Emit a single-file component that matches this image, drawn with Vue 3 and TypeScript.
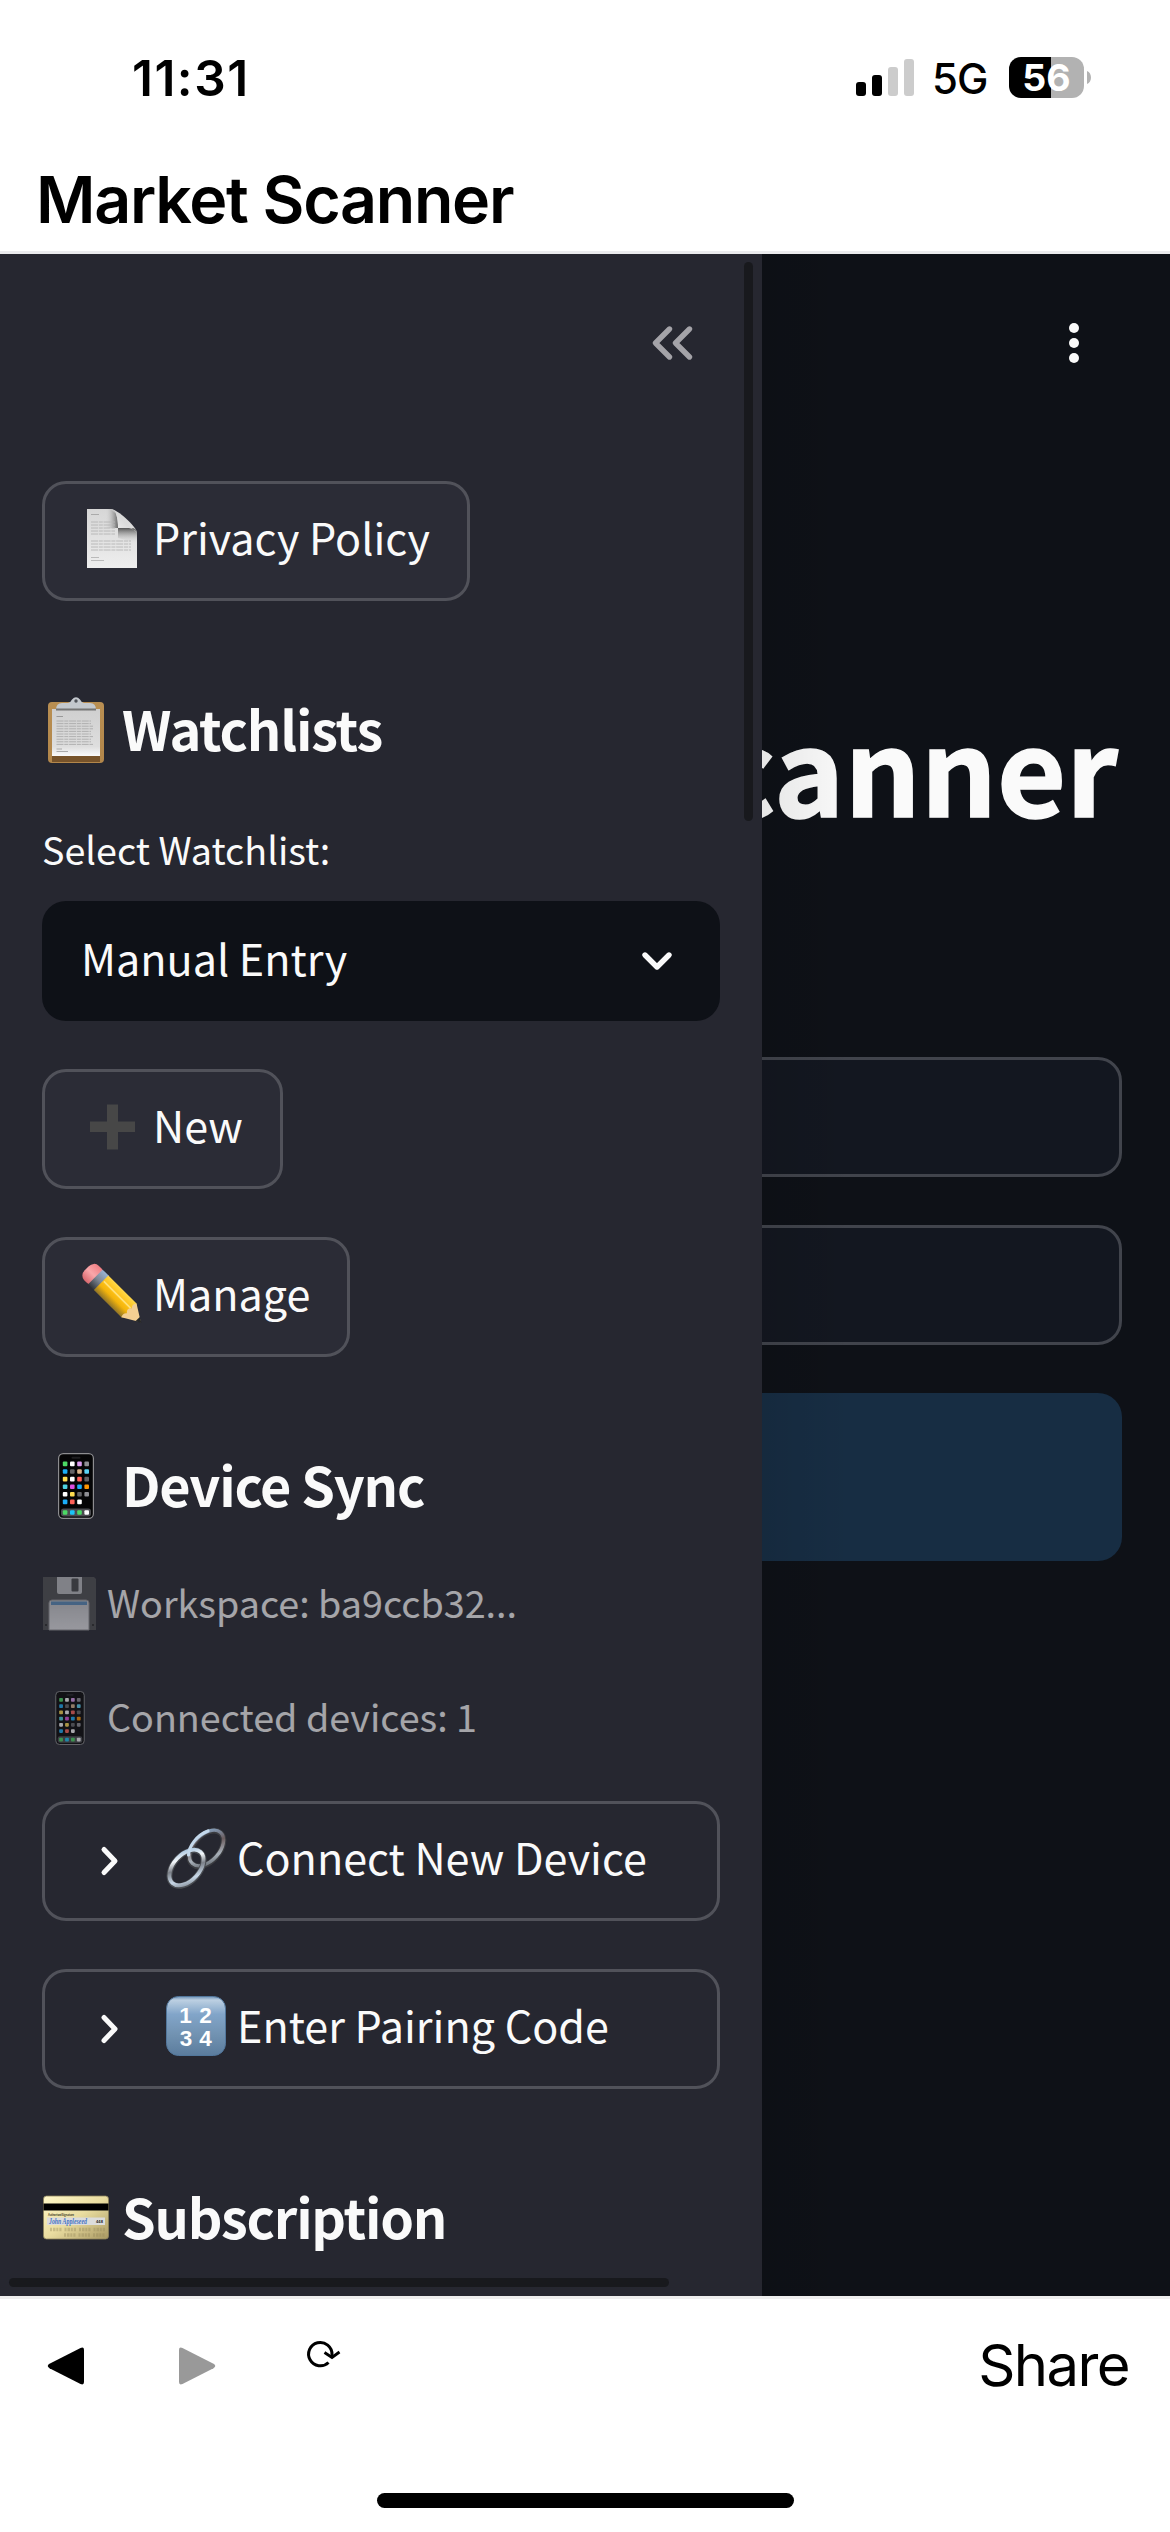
<script setup lang="ts">
interface Dot { x: number; y: number; c: string }

const palette: string[][] = [
  ['#4cd964', '#ffffff', '#dc9cf0', '#8e8e93'],
  ['#1badf8', '#636366', '#d8b48c', '#5ad4f5'],
  ['#ffdc50', '#ffffff', '#ff6259', '#636366'],
  ['#4fd3e0', '#dd4fe0', '#1badf8', '#ff9500'],
  ['#ffffff', '#ffdc50', '#636366', '#8e8e93'],
  ['#1badf8', '#ff6259', '#ffffff'],
]

const appDots: Dot[] = palette.flatMap((row, r) =>
  row.map((c, i) => ({ x: 19.8 + i * 7.2, y: 8.6 + r * 7.6, c })),
)
const dockDots: Dot[] = ['#4cd964', '#1bc5f8', '#4cd964', '#ffffff'].map((c, i) => ({
  x: 19.8 + i * 7.2, y: 57.2, c,
}))

const paperLines: number[] = [15, 18, 21, 24, 27, 34, 37, 40, 43]
const boardLines: number[] = [24, 26.6, 29.2, 31.8, 34.4, 37, 39.6, 42.2, 44.8, 47.4]
</script>

<template>
  <div class="screen">
    <!-- shared emoji artwork -->
    <svg class="defs" width="0" height="0" aria-hidden="true">
      <defs>
        <linearGradient id="page" x1="0" y1="0" x2="0" y2="1">
          <stop offset="0" stop-color="#d6d6d6" /><stop offset="1" stop-color="#eeeeee" />
        </linearGradient>
        <linearGradient id="fold" x1="0" y1="1" x2="1" y2="0">
          <stop offset="0" stop-color="#f6f6f6" /><stop offset="1" stop-color="#bdbdbd" />
        </linearGradient>
        <linearGradient id="foldShade" x1="0" y1="0" x2="0" y2="1">
          <stop offset="0" stop-color="#555" /><stop offset="1" stop-color="#ddd" stop-opacity="0" />
        </linearGradient>
        <linearGradient id="foldSide" x1="1" y1="0" x2="0" y2="0">
          <stop offset="0" stop-color="#666" /><stop offset="1" stop-color="#ddd" stop-opacity="0" />
        </linearGradient>
        <linearGradient id="board" x1="0" y1="0" x2="0" y2="1">
          <stop offset="0" stop-color="#b98f52" /><stop offset="1" stop-color="#b2864a" />
        </linearGradient>
        <linearGradient id="sheet" x1="0" y1="0" x2="0" y2="1">
          <stop offset="0" stop-color="#cfcfcf" /><stop offset=".8" stop-color="#dedede" /><stop offset="1" stop-color="#fafafa" />
        </linearGradient>
        <linearGradient id="keypad" x1="0" y1="0" x2="0" y2="1">
          <stop offset="0" stop-color="#6e93b8" /><stop offset=".06" stop-color="#bdd0e2" />
          <stop offset=".3" stop-color="#82a5c9" /><stop offset=".65" stop-color="#7192b1" /><stop offset="1" stop-color="#5b7c9d" />
        </linearGradient>
        <linearGradient id="card" x1="0" y1="0" x2="1" y2="1">
          <stop offset="0" stop-color="#fff8c8" /><stop offset=".5" stop-color="#eadda0" /><stop offset="1" stop-color="#a89862" />
        </linearGradient>
        <linearGradient id="steel" x1="0" y1="0" x2="1" y2="1">
          <stop offset="0" stop-color="#7fa8d0" /><stop offset=".3" stop-color="#f4f8fb" />
          <stop offset=".5" stop-color="#7b8088" /><stop offset=".75" stop-color="#c8d8e8" /><stop offset="1" stop-color="#6a7078" />
        </linearGradient>
        <linearGradient id="steelDark" x1="0" y1="0" x2="1" y2="1">
          <stop offset="0" stop-color="#8fb6dc" /><stop offset=".4" stop-color="#6a5c5e" />
          <stop offset=".7" stop-color="#a8b0b9" /><stop offset="1" stop-color="#4a4f55" />
        </linearGradient>
        <linearGradient id="wood" x1="0" y1="0" x2="0" y2="1">
          <stop offset="0" stop-color="#ffd84a" /><stop offset=".35" stop-color="#ffc21a" />
          <stop offset=".62" stop-color="#f3b40c" /><stop offset="1" stop-color="#8f7428" />
        </linearGradient>
        <linearGradient id="ferrule" x1="0" y1="0" x2="0" y2="1">
          <stop offset="0" stop-color="#9ab4d4" /><stop offset=".5" stop-color="#7e8794" /><stop offset="1" stop-color="#33363a" />
        </linearGradient>
        <linearGradient id="rubber" x1="0" y1="0" x2="0" y2="1">
          <stop offset="0" stop-color="#f07f84" /><stop offset=".5" stop-color="#f9a7aa" /><stop offset="1" stop-color="#d8686e" />
        </linearGradient>
        <linearGradient id="slate" x1="0" y1="0" x2="0" y2="1">
          <stop offset="0" stop-color="#c4c5c9" /><stop offset="1" stop-color="#e4e4e8" />
        </linearGradient>
      </defs>
      <symbol id="phone" viewBox="0 0 66 66">
        <rect x="15.600" y=".6" width="34.800" height="64.8" rx="4.6" fill="#050506" stroke="#8d8d90" stroke-width="1.2" />
        <rect x="28.500" y="3.8" width="9" height="2" rx="1" fill="#1e1e20" />
        <rect x="18" y="55.4" width="30" height="8" rx="2.6" fill="#4b4c50" />
        <rect v-for="(d, i) in appDots" :key="'a' + i" :x="d.x" :y="d.y" width="4.6" height="4.6" rx="1" :fill="d.c" />
        <rect v-for="(d, i) in dockDots" :key="'d' + i" :x="d.x" :y="d.y" width="4.6" height="4.6" rx="1" :fill="d.c" />
      </symbol>
    </svg>

    <header class="top">
      <div class="status">
        <span class="clock">11:31</span>
        <div class="signals">
          <svg class="bars" width="58" height="37" viewBox="0 0 58 37">
            <rect x="0" y="23" width="10" height="14" rx="3" fill="#000" />
            <rect x="16" y="16" width="10" height="21" rx="3" fill="#000" />
            <rect x="32" y="8" width="10" height="29" rx="3" fill="#ccc" />
            <rect x="48" y="0" width="10" height="37" rx="3" fill="#ccc" />
          </svg>
          <span class="net">5G</span>
          <span class="battery"><span class="level">56</span></span>
          <svg class="nub" width="4" height="13" viewBox="0 0 4 13"><path d="M0 0C5.300 1.500 5.300 11.500 0 13Z" fill="#b2b2b2" /></svg>
        </div>
      </div>
      <h1 class="app-title">Market Scanner</h1>
    </header>

    <div class="web">
      <main class="page">
        <svg class="menu" width="12" height="42" viewBox="0 0 12 42" fill="#fafafa">
          <circle cx="6" cy="6" r="5" /><circle cx="6" cy="21" r="5" /><circle cx="6" cy="36" r="5" />
        </svg>
        <h2 class="page-title">Scanner</h2>
        <div class="panel"></div>
        <div class="panel"></div>
        <div class="notice"></div>
      </main>

      <div class="shade"></div>

      <aside class="sidebar">
        <div class="side-head">
          <svg width="42" height="36" viewBox="0 0 42 36" fill="none" stroke="#a4a3a8" stroke-width="5.400" stroke-linecap="round" stroke-linejoin="round">
            <path d="M18.500 4L4.500 18L18.500 32M38.500 4L24.500 18L38.500 32" />
          </svg>
        </div>

        <button class="btn">
          <svg class="emoji" width="60" height="60" viewBox="0 0 60 60">
            <path d="M6 0H30C36 0 56 18 56 24V59H6Z" fill="url(#page)" />
            <path d="M24 0H31Q37 3 37 19H24Z" fill="url(#foldSide)" />
            <path d="M37 19H50Q56 19 56 24V34L37 29Z" fill="url(#foldShade)" />
            <path d="M30 0Q37 2 37 19Q51 17 56 24Z" fill="url(#fold)" />
            <path d="M10 5.500H18" stroke="#aaa" stroke-width="1" />
            <path v-for="y in paperLines" :key="y" :d="`M10 ${y - 2}H${y < 30 ? 34 : 50}`" stroke="#b4b4b4" stroke-width=".9" stroke-dasharray="7 .8 4 .8" />
            <path d="M10 48.500H18M10 51.500H23" stroke="#b4b4b4" stroke-width=".9" />
          </svg>
          <span>Privacy Policy</span>
        </button>

        <h3 class="heading">
          <svg width="66" height="66" viewBox="0 0 66 66">
            <rect x="6" y="5" width="56" height="61" rx="4" fill="url(#board)" />
            <path d="M10 59H58V65H10Z" fill="#77532a" />
            <rect x="10" y="12" width="48" height="47" fill="url(#sheet)" />
            <path d="M14 13Q14 6 20 6H26Q29 5 30 2.500Q34 -2 38 2.500Q39 5 42 6H48Q54 6 54 13Z" fill="#c3c8cd" />
            <path d="M14 12.500H54" stroke="#757575" stroke-width="2" />
            <circle cx="34" cy="4" r="1.700" fill="#50545a" />
            <path d="M14.500 19.500H21" stroke="#999" stroke-width="1" />
            <path v-for="y in boardLines" :key="y" :d="`M14.500 ${y}H${y % 2 > 1 ? 51 : 49}`" stroke="#ababab" stroke-width=".9" stroke-dasharray="7 .8 4 .8" />
            <path d="M14.500 52H20M14.500 54.500H26" stroke="#aaa" stroke-width="1" />
          </svg>
          <span>Watchlists</span>
        </h3>

        <label class="label">Select Watchlist:</label>
        <div class="select">
          <span>Manual Entry</span>
          <svg width="32" height="20" viewBox="0 0 32 20" fill="none" stroke="#fafafa" stroke-width="5.400" stroke-linecap="round" stroke-linejoin="round">
            <path d="M4 4L16 16L28 4" />
          </svg>
        </div>

        <button class="btn">
          <svg class="emoji" width="60" height="60" viewBox="0 0 60 60">
            <path d="M9 24.500H26V7.500H37V24.500H54V35H37V52.500H26V35H9Z" fill="#474747" />
          </svg>
          <span>New</span>
        </button>

        <button class="btn">
          <svg class="emoji" width="60" height="60" viewBox="0 0 60 60">
            <g transform="translate(11.500 9) rotate(45) scale(1.020 1.140)">
              <rect x="-8" y="-9" width="17" height="18" rx="6.500" fill="url(#rubber)" />
              <rect x="4" y="-9" width="9" height="18" fill="url(#ferrule)" />
              <path d="M12 -9H51Q55 -6 51 -3Q55 0 51 4Q54 7 50 9H12Z" fill="url(#wood)" />
              <path d="M13 -2.500H50" stroke="#ffe27a" stroke-width="1.500" />
              <path d="M51 -9L67 0L50 9Q48 5 51 3Q47 0 51 -3Q48 -6 51 -9Z" fill="#f4cf92" />
              <path d="M62.500 -2.700L68 0L62.500 2.700Z" fill="#26282a" />
            </g>
          </svg>
          <span>Manage</span>
        </button>

        <h3 class="heading">
          <svg width="66" height="66"><use href="#phone" x="1" width="66" height="66" /></svg>
          <span>Device Sync</span>
        </h3>

        <p class="caption workspace">
          <svg width="54" height="54" viewBox="0 0 54 54">
            <path d="M1 0H52L54 2V53H1Z" fill="#4e4f52" />
            <path d="M15 0H40V15Q40 17 38 17H17Q15 17 15 15Z" fill="#bcbdc1" />
            <rect x="29.500" y="1.500" width="7" height="13" rx="1" fill="#46474a" />
            <path d="M7 53V26Q7 23 10 23H44Q47 23 47 26V53Z" fill="url(#slate)" stroke="#8e8f92" stroke-width="1" />
            <rect x="9" y="24.500" width="36" height="3.500" fill="#5b8cba" />
            <circle cx="4" cy="48" r="1" fill="#222" /><circle cx="51" cy="48" r="1" fill="#222" />
          </svg>
          <span>Workspace: ba9ccb32...</span>
        </p>
        <p class="caption">
          <svg width="54" height="54"><use href="#phone" x="1" width="54" height="54" /></svg>
          <span>Connected devices: 1</span>
        </p>

        <div class="expander">
          <svg class="chev" width="22" height="32" viewBox="0 0 22 32" fill="none" stroke="#fafafa" stroke-width="5" stroke-linecap="round" stroke-linejoin="round">
            <path d="M5 4.500L16 16L5 27.500" />
          </svg>
          <svg class="emoji" width="60" height="60" viewBox="0 0 60 60" fill="none">
            <ellipse cx="40.500" cy="20.500" rx="13" ry="21" transform="rotate(42 40.500 20.500)" stroke="#3b3c40" stroke-width="5.600" />
            <ellipse cx="40.500" cy="20" rx="13" ry="21" transform="rotate(42 40.500 20)" stroke="url(#steelDark)" stroke-width="3.400" />
            <ellipse cx="20.500" cy="40" rx="13" ry="21" transform="rotate(42 20.500 40)" stroke="#4a4d52" stroke-width="5.800" />
            <ellipse cx="20.500" cy="39.500" rx="13" ry="21" transform="rotate(42 20.500 39.500)" stroke="url(#steel)" stroke-width="3.800" />
            <path d="M22.500 27C23 18 31 7 42 3" stroke="#c3d8ec" stroke-width="3.200" stroke-linecap="round" />
          </svg>
          <span>Connect New Device</span>
        </div>

        <div class="expander">
          <svg class="chev" width="22" height="32" viewBox="0 0 22 32" fill="none" stroke="#fafafa" stroke-width="5" stroke-linecap="round" stroke-linejoin="round">
            <path d="M5 4.500L16 16L5 27.500" />
          </svg>
          <svg class="emoji" width="60" height="60" viewBox="0 0 60 60">
            <rect x=".5" y=".5" width="59" height="59" rx="12" fill="url(#keypad)" stroke="#52779c" />
            <g class="keys" fill="#fff" text-anchor="middle">
              <text x="19.500" y="26.500">1</text><text x="39.500" y="26.500">2</text>
              <text x="20" y="49.500">3</text><text x="39.500" y="49.500">4</text>
            </g>
          </svg>
          <span>Enter Pairing Code</span>
        </div>

        <h3 class="heading">
          <svg width="68" height="66" viewBox="0 0 68 66">
            <rect x="1.500" y="11" width="65" height="43" rx="3" fill="url(#card)" stroke="#8d835c" stroke-width=".8" />
            <rect x="1.500" y="18.500" width="65" height="7" fill="#000" />
            <rect x="5" y="32.500" width="58" height="7.500" fill="#dcdcdc" />
            <text x="6" y="30.500" font-size="3" fill="#554f38" textLength="26">Authorised Signature</text>
            <text class="sign" x="7" y="38.800" font-size="7.500" fill="#4473c4" textLength="38" lengthAdjust="spacingAndGlyphs">John Appleseed</text>
            <text x="54" y="37.500" font-size="4" font-weight="700" fill="#222">448</text>
            <path d="M8 44.500H63M22 50H63" stroke="#978a5c" stroke-width="3.400" stroke-dasharray="2 1 2.500 .8 2 1 2.200 3" opacity=".4" />
          </svg>
          <span>Subscription</span>
        </h3>

        <div class="vbar"></div>
        <div class="hbar"></div>
      </aside>
    </div>

    <footer class="toolbar">
      <div class="nav">
        <svg width="38" height="38" viewBox="0 0 38 38"><path d="M2.500 16.800L33.500 1Q37 -.5 37 3V35Q37 38.500 33.500 37L2.500 21.200Q-1 19 2.500 16.800Z" fill="#000" /></svg>
        <svg class="fwd" width="38" height="38" viewBox="0 0 38 38"><path d="M35.500 16.800L4.500 1Q1 -.5 1 3V35Q1 38.500 4.500 37L35.500 21.200Q39 19 35.500 16.800Z" fill="#999" /></svg>
        <svg class="reload" width="34" height="28" viewBox="0 0 34 28" fill="none" stroke="#000" stroke-width="3">
          <path d="M21.500 21.500A11.700 11.700 0 1 1 25 13.500V15" /><path d="M17.500 11.500L25 16.500L32.500 11" stroke-width="2.800" />
        </svg>
      </div>
      <span class="share">Share</span>
      <div class="home"></div>
    </footer>
  </div>
</template>

<style>
html, body { margin: 0; background: #fff; }
</style>

<style scoped>
.screen {
  width: 1170px;
  height: 2532px;
  display: flex;
  flex-direction: column;
  overflow: hidden;
  background: #fff;
  color: #000;
  font-family: Inter, "Liberation Sans", sans-serif;
}
.defs { position: absolute; }
svg { display: block; flex: none; overflow: visible; }
h1, h2, h3, p { margin: 0; }

.top {
  height: 254px;
  box-sizing: border-box;
  border-bottom: 3px solid #ebebed;
  flex: none;
}
.status {
  height: 158px;
  display: flex;
  justify-content: space-between;
  padding: 0 79px 0 132px;
}
.clock {
  font-size: 49.5px;
  font-weight: 600;
  line-height: 156px;
  letter-spacing: 1.5px;
}
.signals { display: flex; height: 158px; }
.bars { margin-top: 59px; }
.net {
  width: 74px;
  margin-left: 18px;
  font-size: 42px;
  font-weight: 500;
  line-height: 158px;
  letter-spacing: -1px;
}
.battery {
  margin: 57px 3px 0 3px;
  width: 75px;
  height: 41px;
  border-radius: 12px;
  background: linear-gradient(90deg, #000 56%, #b2b2b2 56%);
  color: #fff;
  text-align: center;
}
.level { font-size: 37.5px; font-weight: 700; line-height: 41px; }
.nub { margin-top: 71px; }
.app-title {
  padding-left: 36px;
  font-size: 64.5px;
  font-weight: 600;
  line-height: 84px;
  letter-spacing: -1.3px;
  white-space: nowrap;
}

.web {
  position: relative;
  height: 2042px;
  flex: none;
  background: #0e1117;
  color: #fafafa;
  font-family: "Noto Sans CJK SC", "Noto Sans", sans-serif;
  overflow: hidden;
}
.page {
  display: flex;
  flex-direction: column;
  padding: 68px 48px 0;
}
.menu { margin: 0 42px 0 auto; }
.page-title {
  margin-top: 303px;
  height: 336px;
  font-size: 119px;
  font-weight: 700;
  line-height: 196px;
  text-align: right;
  padding-right: 4px;
  -webkit-text-stroke: 1.6px #fafafa;
}
.panel {
  height: 120px;
  box-sizing: border-box;
  border: 3px solid #41444c;
  border-radius: 24px;
  background: #131720;
  margin-bottom: 48px;
}
.page-title + .panel { margin-top: 54px; }
.notice { height: 168px; border-radius: 24px; background: #172d43; }

.shade {
  position: absolute;
  inset: 0 auto 0 762px;
  width: 90px;
  background: linear-gradient(90deg, rgba(0, 0, 0, 0.08), transparent);
}
.sidebar {
  position: absolute;
  inset: 0 auto 0 0;
  width: 762px;
  box-sizing: border-box;
  padding: 0 42px;
  background: #262730;
  display: flex;
  flex-direction: column;
  align-items: flex-start;
  overflow: hidden;
  font-size: 43.1px;
  white-space: nowrap;
}
.sidebar > * { flex: none; }
.side-head {
  width: 100%;
  height: 227px;
  box-sizing: border-box;
  padding: 71px 27px 0 0;
  display: flex;
  justify-content: flex-end;
}
.btn {
  height: 120px;
  box-sizing: border-box;
  border: 3px solid #51525a;
  border-radius: 24px;
  background: #2b2c36;
  color: inherit;
  font: inherit;
  line-height: 104px;
  display: flex;
  align-items: flex-start;
  padding: 0 37px 0 36px;
}
.btn .emoji { margin: 25px 12px 0 0; }
.btn + .btn, .select + .btn, .expander + .expander { margin-top: 48px; }
.heading {
  height: 66px;
  margin-top: 96px;
  display: flex;
  font-size: 54px;
  font-weight: 600;
  line-height: 61px;
  letter-spacing: -1.2px;
}
.heading span { margin-left: auto; }
.heading svg { margin-right: 14px; letter-spacing: 0; }
.heading svg[width="68"] { margin-right: 12px; }
.label { margin: 55px 0 22px; font-size: 37.7px; line-height: 61px; }
.select {
  width: 678px;
  height: 120px;
  box-sizing: border-box;
  border-radius: 24px;
  background: #0e1117;
  padding: 0 47px 0 39px;
  line-height: 112px;
  display: flex;
  justify-content: space-between;
}
.select svg { margin-top: 50px; }
.caption {
  height: 54px;
  display: flex;
  gap: 11px;
  font-size: 37.7px;
  line-height: 49px;
  opacity: 0.6;
  margin: 60px 0 56px;
}
.caption.workspace { margin: 58px 0 0; }
.expander {
  width: 678px;
  height: 120px;
  box-sizing: border-box;
  border: 3px solid #51525a;
  border-radius: 24px;
  line-height: 104px;
  display: flex;
  padding-left: 54px;
}
.chev { margin: 41px 45px 0 0; }
.expander .emoji { margin: 24px 11px 0 0; }
.keys { font: 700 22.5px "Liberation Sans", sans-serif; }
.sign { font-family: "Liberation Serif", serif; font-style: italic; }
.vbar, .hbar { position: absolute; background: #18191d; border-radius: 5px; }
.vbar { left: 744px; top: 8px; width: 9px; height: 559px; }
.hbar { left: 9px; bottom: 9px; width: 660px; height: 9px; }

.toolbar {
  position: relative;
  flex: 1;
  border-top: 3px solid #eeeeee;
  display: flex;
  justify-content: space-between;
  padding: 0 41px 0 47px;
}
.nav { display: flex; align-items: flex-start; padding-top: 48px; }
.fwd { margin-left: 93px; }
.reload { margin: -6px 0 0 91px; }
.share { font-size: 58px; line-height: 132px; letter-spacing: -1.6px; }
.home {
  position: absolute;
  left: 377px;
  bottom: 24px;
  width: 417px;
  height: 15px;
  border-radius: 8px;
  background: #000;
}
</style>
